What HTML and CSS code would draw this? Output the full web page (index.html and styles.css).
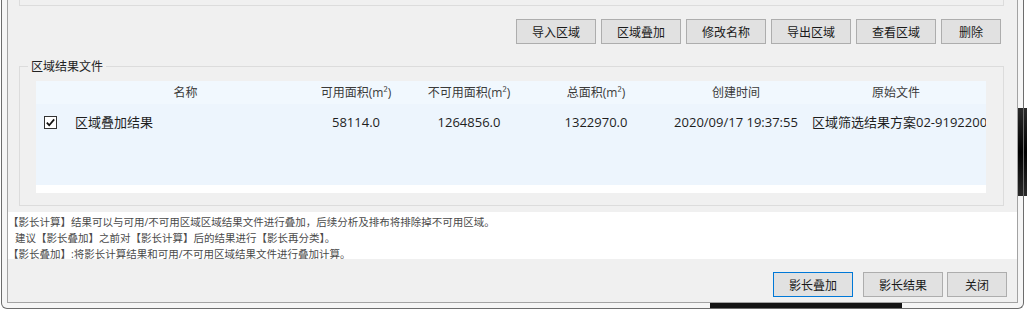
FILE: index.html
```html
<!DOCTYPE html>
<html lang="zh-CN">
<head>
    <meta charset="UTF-8">
    <meta name="viewport" content="width=device-width, initial-scale=1.0">
    <title>影长叠加</title>
    <link rel="stylesheet" href="styles.css">
</head>
<body>
    <div class="window">
        <div class="client">
            <!-- 上方分组框（只露出底边） -->
            <div class="top-group"></div>

            <!-- 区域操作按钮 -->
            <div class="toolbar">
                <button class="btn">导入区域</button>
                <button class="btn">区域叠加</button>
                <button class="btn">修改名称</button>
                <button class="btn">导出区域</button>
                <button class="btn">查看区域</button>
                <button class="btn btn-short">删除</button>
            </div>

            <!-- 区域结果文件 -->
            <div class="group">
                <span class="group-title">区域结果文件</span>
                <div class="list">
                    <div class="list-head">
                        <span class="cell cell-name">名称</span>
                        <span class="cell">可用面积(m²)</span>
                        <span class="cell">不可用面积(m²)</span>
                        <span class="cell">总面积(m²)</span>
                        <span class="cell">创建时间</span>
                        <span class="cell">原始文件</span>
                    </div>
                    <div class="list-row">
                        <span class="cell cell-name">
                            <svg class="check" width="13" height="13" viewBox="0 0 13 13">
                                <rect x="0.5" y="0.5" width="12" height="12" fill="#fff" stroke="#333"/>
                                <path d="M2.8 6.6 L5.2 9.2 L10.2 3.4" fill="none" stroke="#111" stroke-width="1.7"/>
                            </svg>
                            区域叠加结果
                        </span>
                        <span class="cell">58114.0</span>
                        <span class="cell">1264856.0</span>
                        <span class="cell">1322970.0</span>
                        <span class="cell">2020/09/17 19:37:55</span>
                        <span class="cell cell-file">区域筛选结果方案02-91922003</span>
                    </div>
                </div>
            </div>

            <!-- 说明文字 -->
            <div class="notes">
                <p>【影长计算】结果可以与可用/不可用区域区域结果文件进行叠加，后续分析及排布将排除掉不可用区域。</p>
                <p class="indent">建议【影长叠加】之前对【影长计算】后的结果进行【影长再分类】。</p>
                <p>【影长叠加】:将影长计算结果和可用/不可用区域结果文件进行叠加计算。</p>
            </div>

            <!-- 底部按钮 -->
            <div class="bottom-bar">
                <button class="btn btn-default">影长叠加</button>
                <button class="btn">影长结果</button>
                <button class="btn btn-short">关闭</button>
            </div>
        </div>
    </div>
</body>
</html>
```

FILE: styles.css
```css
/* 页面铺满窗口 */
html, body {
    margin: 0;
    padding: 0;
    height: 100%;
}

/* 桌面背景，右侧露出一点深色 */
body {
    background:
        linear-gradient(#2a2a2a, #000 50%, #2a2a2a) no-repeat right 0 top 108px / 4px 88px,
        #fff;
    font-family: "Open Sans", "Noto Sans CJK SC", sans-serif;
    font-size: 12px;
    color: #222;
    overflow: hidden;
}

/* 对话框外框（半透明边框，透出后面的东西） */
.window {
    box-sizing: border-box;
    width: 1023px;
    height: 309px;
    margin-left: 1px;
    padding: 0 5px 5px 5px;
    border: 1px solid #6d6d6d;
    border-top: none;
    border-radius: 0 0 6px 6px;
    background:
        linear-gradient(#141414, #141414) no-repeat 708px 302px / 192px 6px,
        linear-gradient(#2a2a2a, #000 50%, #2a2a2a) no-repeat right 0 top 108px / 5px 88px,
        #f6f6f6;
}

/* 客户区 */
.client {
    box-sizing: border-box;
    height: 303px;
    border: 1px solid #a3a3a3;
    border-top: none;
    background: #f0f0f0;
}

.top-group {
    box-sizing: border-box;
    width: 985px;
    height: 6px;
    margin-left: 11px;
    border: 1px solid #dcdcdc;
    border-top: none;
}

/* 按钮 */
.btn {
    box-sizing: border-box;
    width: 80px;
    height: 25px;
    padding: 0;
    border: 1px solid #adadad;
    background: #e1e1e1;
    font-family: inherit;
    font-size: 12px;
    color: #1a1a1a;
}

.btn-short {
    width: 60px;
}

.btn-default {
    border-color: #0078d7;
}

.toolbar {
    display: flex;
    justify-content: flex-end;
    gap: 5px;
    margin-top: 13px;
    padding-right: 16px;
}

/* 分组框 */
.group {
    box-sizing: border-box;
    width: 985px;
    height: 140px;
    margin: 22px 0 0 11px;
    border: 1px solid #dcdcdc;
}

.group-title {
    display: block;
    width: fit-content;
    margin: -7px 0 0 8px;
    padding: 0 3px;
    line-height: 14px;
    background: #f0f0f0;
    color: #222;
}

/* 列表 */
.list {
    width: 950px;
    height: 104px;
    margin: 7px 0 0 16px;
    border-bottom: 8px solid #fff;
    background: #edf5fd;
    overflow: hidden;
}

.list-head,
.list-row {
    display: grid;
    grid-template-columns: 264px 112px 114px 140px 140px 180px;
    text-align: center;
    white-space: nowrap;
}

.list-head {
    height: 23px;
    line-height: 23px;
    background: #f1f8fe;
    color: #3a3a3a;
}

.list-row {
    height: 24px;
    line-height: 24px;
    margin-top: 6px;
    font-size: 13px;
    color: #1e1e1e;
}

.cell {
    overflow: hidden;
}

.list-head .cell-name {
    padding-left: 35px;
}

.list-row .cell-name {
    display: flex;
    align-items: center;
    padding-left: 8px;
}

.check {
    flex: none;
    margin-right: 18px;
}

.list-row .cell-file {
    text-align: left;
    padding-left: 6px;
}

/* 说明文字 */
.notes {
    box-sizing: border-box;
    height: 47px;
    margin-top: 6px;
    padding-top: 2px;
    background: #fff;
    font-size: 10.5px;
    line-height: 16px;
    color: #4a4a4a;
    white-space: nowrap;
}

.notes p {
    margin: 0;
}

.notes .indent {
    padding-left: 7px;
}

.bottom-bar {
    display: flex;
    justify-content: flex-end;
    gap: 4px;
    margin-top: 13px;
    padding-right: 10px;
}

.bottom-bar .btn-default {
    margin-right: 6px;
}
```
